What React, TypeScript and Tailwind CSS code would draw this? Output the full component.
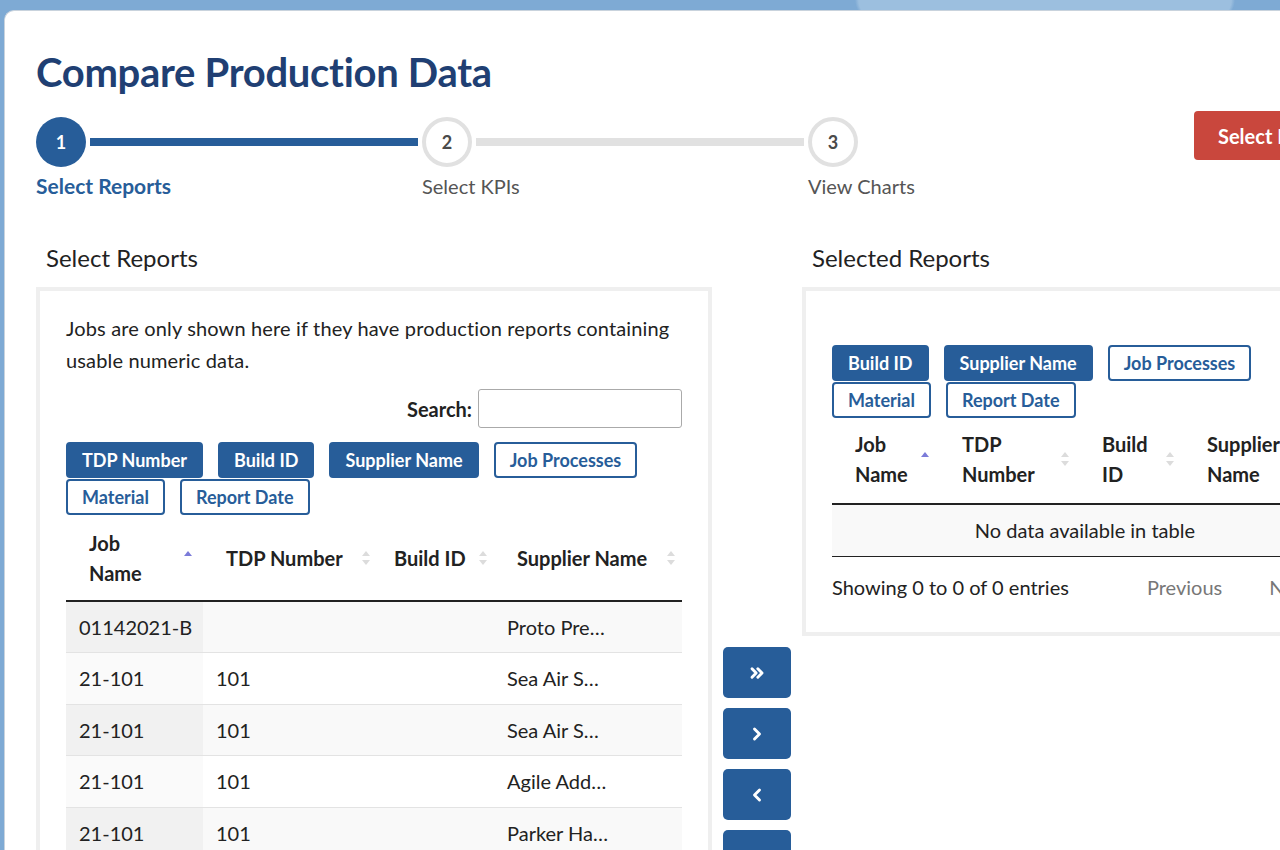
import { ChevronsRight, ChevronRight, ChevronLeft } from 'lucide-react';

const font = { fontFamily: 'Lato, "Noto Sans", sans-serif' };

function SortIcon({ active }: { active?: boolean }) {
  return (
    <svg width="10" height="18" viewBox="0 0 10 18" className="shrink-0">
      <path d="M5 2 L9 7 L1 7 Z" fill={active ? '#7b7bd9' : '#dcdcdc'} />
      {!active && <path d="M5 16 L9 11 L1 11 Z" fill="#dcdcdc" />}
    </svg>
  );
}

function FilterButton({ label, on }: { label: string; on?: boolean }) {
  return (
    <button
      className={
        'h-[36px] px-[14px] rounded-[4px] border-2 border-[#275d99] text-[18px] font-bold leading-none ' +
        (on ? 'bg-[#275d99] text-white' : 'bg-white text-[#275d99]')
      }
    >
      {label}
    </button>
  );
}

function Step({ n, label, active, line, lineOn }: { n: number; label: string; active?: boolean; line?: boolean; lineOn?: boolean }) {
  return (
    <div className={line ? 'w-[386px]' : 'w-[130px]'}>
      <div className="flex items-center">
        <div
          className={
            'w-[50px] h-[50px] rounded-full flex items-center justify-center text-[18px] font-bold shrink-0 ' +
            (active ? 'bg-[#275d99] text-white' : 'bg-white border-[4px] border-[#e1e1e1] text-[#4a4a4a]')
          }
        >
          {n}
        </div>
        {line && <div className={'flex-1 h-[8px] mx-[4px] ' + (lineOn ? 'bg-[#275d99]' : 'bg-[#e1e1e1]')} />}
      </div>
      <div className={'mt-[6px] leading-[26px] whitespace-nowrap ' + (active ? 'text-[21px] font-bold text-[#275d99]' : 'text-[20px] text-[#555]')}>
        {label}
      </div>
    </div>
  );
}

const rows = [
  ['01142021-B', '', '', 'Proto Pre…'],
  ['21-101', '101', '', 'Sea Air S…'],
  ['21-101', '101', '', 'Sea Air S…'],
  ['21-101', '101', '', 'Agile Add…'],
  ['21-101', '101', '', 'Parker Ha…'],
];

export default function App() {
  return (
    <div
      className="w-[1280px] h-[850px] overflow-hidden bg-[#7eaad4] bg-[radial-gradient(ellipse_190px_60px_at_1045px_0px,#9cbfdf_0%,#9cbfdf_98%,transparent_100%)] text-[#222]"
      style={font}
    >
      <div className="ml-[4px] mt-[10px] w-[1600px] h-[900px] bg-white rounded-tl-[10px] border-l border-t border-[#c9d3dd] pl-[31px]">
        <h1 className="pt-[37px] text-[40px] leading-[48px] font-bold text-[#203f73] tracking-[-0.3px]">Compare Production Data</h1>

        <div className="mt-[21px] flex">
          <Step n={1} label="Select Reports" active line lineOn />
          <Step n={2} label="Select KPIs" line />
          <Step n={3} label="View Charts" />
          <div className="ml-[256px] -mt-[6px]">
            <button className="h-[49px] px-[24px] rounded-[4px] bg-[#c9473d] text-white text-[20px] font-bold whitespace-nowrap">
              Select Reports
            </button>
          </div>
        </div>

        <div className="mt-[44px] flex">
          {/* left column */}
          <div className="w-[676px]">
            <h2 className="pl-[10px] text-[24px] leading-[30px] text-[#222]">Select Reports</h2>
            <div className="mt-[14px] border-[4px] border-[#efefef] px-[26px] pt-[21px] h-[600px]">
              <p className="text-[20px] leading-[32px] text-[#222] tracking-[0.15px]">
                Jobs are only shown here if they have production reports containing usable numeric data.
              </p>
              <div className="mt-[13px] flex items-center justify-end">
                <span className="text-[20px] font-bold mr-[6px]">Search:</span>
                <input className="w-[204px] h-[39px] border border-[#aaa] rounded-[3px]" />
              </div>
              <div className="mt-[14px] flex flex-wrap gap-x-[15px] gap-y-[1px] w-[600px]">
                <FilterButton label="TDP Number" on />
                <FilterButton label="Build ID" on />
                <FilterButton label="Supplier Name" on />
                <FilterButton label="Job Processes" />
                <FilterButton label="Material" />
                <FilterButton label="Report Date" />
              </div>
              <table className="mt-[13px] w-[616px] border-collapse text-[20px]">
                <thead>
                  <tr className="border-b-2 border-[#222] text-left">
                    <th className="w-[137px] pl-[23px] pr-[10px] pt-0 pb-[12px] font-bold leading-[30px]">
                      <div className="flex items-center justify-between">
                        <span>Job<br />Name</span>
                        <SortIcon active />
                      </div>
                    </th>
                    <th className="w-[178px] pl-[23px] pr-[10px] pb-[12px] font-bold">
                      <div className="flex items-center justify-between">
                        <span>TDP Number</span>
                        <SortIcon />
                      </div>
                    </th>
                    <th className="w-[113px] pl-[13px] pr-[6px] pb-[12px] font-bold">
                      <div className="flex items-center justify-between">
                        <span>Build ID</span>
                        <SortIcon />
                      </div>
                    </th>
                    <th className="w-[188px] pl-[23px] pr-[6px] pb-[12px] font-bold">
                      <div className="flex items-center justify-between">
                        <span>Supplier Name</span>
                        <SortIcon />
                      </div>
                    </th>
                  </tr>
                </thead>
                <tbody>
                  {rows.map((r, i) => (
                    <tr key={i} className={'h-[51.5px] border-b border-[#e3e3e3] ' + (i % 2 === 0 ? 'bg-[#f9f9f9]' : 'bg-white')}>
                      <td className={'pl-[13px] ' + (i % 2 === 0 ? 'bg-[#f1f1f1]' : 'bg-[#fafafa]')}>{r[0]}</td>
                      <td className="pl-[13px]">{r[1]}</td>
                      <td className="pl-[13px]">{r[2]}</td>
                      <td className="pl-[13px]">{r[3]}</td>
                    </tr>
                  ))}
                </tbody>
              </table>
            </div>
          </div>

          {/* move buttons */}
          <div className="w-[90px] pl-[11px] pt-[404px] flex flex-col gap-[10px]">
            <button className="w-[68px] h-[51px] rounded-[5px] bg-[#275d99] text-white flex items-center justify-center">
              <ChevronsRight size={20} strokeWidth={3.5} />
            </button>
            <button className="w-[68px] h-[51px] rounded-[5px] bg-[#275d99] text-white flex items-center justify-center">
              <ChevronRight size={20} strokeWidth={3.5} />
            </button>
            <button className="w-[68px] h-[51px] rounded-[5px] bg-[#275d99] text-white flex items-center justify-center">
              <ChevronLeft size={20} strokeWidth={3.5} />
            </button>
            <button className="w-[68px] h-[51px] rounded-[5px] bg-[#275d99] text-white flex items-center justify-center">
              <ChevronsRight size={20} strokeWidth={3.5} className="rotate-180" />
            </button>
          </div>

          {/* right column */}
          <div className="w-[676px]">
            <h2 className="pl-[10px] text-[24px] leading-[30px] text-[#222]">Selected Reports</h2>
            <div className="mt-[14px] border-[4px] border-[#efefef] px-[26px] pt-[54px] pb-[30px]">
              <div className="flex flex-wrap gap-x-[15px] gap-y-[1px] w-[440px]">
                <FilterButton label="Build ID" on />
                <FilterButton label="Supplier Name" on />
                <FilterButton label="Job Processes" />
                <FilterButton label="Material" />
                <FilterButton label="Report Date" />
              </div>
              <table className="mt-[11px] w-[616px] border-collapse text-[20px]">
                <thead>
                  <tr className="h-[74px] border-b-2 border-[#222] text-left">
                    <th className="w-[108px] pl-[23px] pr-[10px] pb-[14px] font-bold leading-[30px]">
                      <div className="flex items-center justify-between">
                        <span>Job<br />Name</span>
                        <SortIcon active />
                      </div>
                    </th>
                    <th className="w-[140px] pl-[22px] pr-[10px] pb-[14px] font-bold leading-[30px]">
                      <div className="flex items-center justify-between">
                        <span>TDP<br />Number</span>
                        <SortIcon />
                      </div>
                    </th>
                    <th className="w-[105px] pl-[22px] pr-[10px] pb-[14px] font-bold leading-[30px]">
                      <div className="flex items-center justify-between">
                        <span>Build<br />ID</span>
                        <SortIcon />
                      </div>
                    </th>
                    <th className="pl-[22px] pb-[14px] font-bold leading-[30px]">
                      <span>Supplier<br />Name</span>
                    </th>
                  </tr>
                </thead>
                <tbody>
                  <tr className="h-[52px] bg-[#f9f9f9] border-b border-[#222]">
                    <td colSpan={3} className="text-right pr-[0px]">
                      <span className="relative left-[10px]">No data available in table</span>
                    </td>
                    <td />
                  </tr>
                </tbody>
              </table>
              <div className="mt-[15px] flex items-center text-[20px]">
                <span>Showing 0 to 0 of 0 entries</span>
                <span className="ml-[78px] text-[#777]">Previous</span>
                <span className="ml-[47px] text-[#777]">Next</span>
              </div>
            </div>
          </div>
        </div>
      </div>
    </div>
  );
}
